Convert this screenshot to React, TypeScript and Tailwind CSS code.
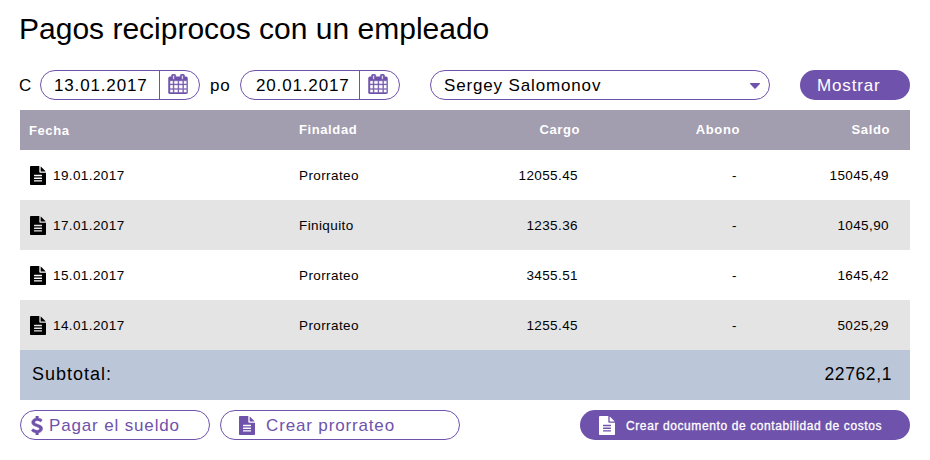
import React from "react";

const CALENDAR =
  "M128 1664h288v-288h-288v288zM480 1664h352v-288h-352v288zM128 1312h288v-352h-288v352zM480 1312h352v-352h-352v352zM128 896h288v-288h-288v288zM896 1664h352v-288h-352v288zM480 896h352v-288h-352v288zM1312 1664h288v-288h-288v288zM896 1312h352v-352h-352v352zM512 448v-288q0-13-9.5-22.5t-22.5-9.5h-64q-13 0-22.5 9.5t-9.5 22.5v288q0 13 9.5 22.5t22.5 9.5h64q13 0 22.5-9.5t9.5-22.5zM1312 1312h288v-352h-288v352zM896 896h352v-288h-352v288zM1312 896h288v-288h-288v288zM1280 448v-288q0-13-9.5-22.5t-22.5-9.5h-64q-13 0-22.5 9.5t-9.5 22.5v288q0 13 9.5 22.5t22.5 9.5h64q13 0 22.5-9.5t9.5-22.5zM1664 384v1280q0 52-38 90t-90 38h-1408q-52 0-90-38t-38-90v-1280q0-52 38-90t90-38h128v-96q0-66 47-113t113-47h64q66 0 113 47t47 113v96h384v-96q0-66 47-113t113-47h64q66 0 113 47t47 113v96h128q52 0 90 38t38 90z";

const FILE =
  "M1024 512v-472q22 14 36 28l408 408q14 14 28 36h-472zM896 544q0 40 28 68t68 28h544v1056q0 40-28 68t-68 28h-1344q-40 0-68-28t-28-68v-1600q0-40 28-68t68-28h800v544zM1152 1440v-64q0-14-9-23t-23-9h-704q-14 0-23 9t-9 23v64q0 14 9 23t23 9h704q14 0 23-9t9-23zM1152 1184v-64q0-14-9-23t-23-9h-704q-14 0-23 9t-9 23v64q0 14 9 23t23 9h704q14 0 23-9t9-23zM1152 928v-64q0-14-9-23t-23-9h-704q-14 0-23 9t-9 23v64q0 14 9 23t23 9h704q14 0 23-9t9-23z";

const DOLLAR =
  "M978 1185q0 153-99.5 263.5t-258.5 136.5v175q0 14-9 23t-23 9h-135q-13 0-22.5-9.5t-9.5-22.5v-175q-66-9-127.5-31t-101.5-44.5-74-48-46.5-37.5-17.5-18q-17-21-2-41l103-135q7-10 23-12 15-2 24 9l2 2q113 99 243 125 37 8 74 8 81 0 142.5-43t61.5-122q0-28-15-53t-33.5-42-58.5-37.5-66-32-80-32.5q-39-16-61.5-25t-61.5-26.5-62.5-31-56.5-35.5-53.5-42.5-43.5-49-35.5-58-21-66.5-8.5-78q0-138 98-242t255-134v-180q0-13 9.5-22.5t22.5-9.5h135q14 0 23 9t9 23v176q57 6 110.5 23t87 33.5 63.5 37.5 39 29 15 14q17 18 5 38l-81 146q-8 15-23 16-14 3-27-7-3-3-14.5-12t-39-26.5-58.5-32-74.5-26-85.5-11.5q-95 0-155 43t-60 111q0 26 8.5 48t29.5 41.5 39.5 33 56 31 60.5 27 70 27.5q53 20 81 31.5t76 35 75.5 42.5 62 50 53 63.5 31.5 76.5 13 94z";

function FileIcon() {
  return (
    <svg viewBox="0 0 1536 1792" className="h-[19px] w-4 shrink-0" preserveAspectRatio="none" fill="currentColor">
      <path fillRule="evenodd" d={FILE} />
    </svg>
  );
}

function DateField({ value, className }: { value: string; className: string }) {
  return (
    <div className="flex h-[30px] w-40 rounded-full border border-[#6f52ab]">
      <div className={`flex w-[119px] items-center border-r border-[#6f52ab] pt-0.5 ${className}`}>{value}</div>
      <div className="flex flex-1 items-start pt-[3px] pl-2 text-[#6f52ab]">
        <svg viewBox="-40 0 1744 1792" className="h-5 w-5" preserveAspectRatio="none" fill="currentColor" stroke="currentColor" strokeWidth="44">
          <path d={CALENDAR} />
        </svg>
      </div>
    </div>
  );
}

const rows = [
  ["19.01.2017", "Prorrateo", "12055.45", "-", "15045,49"],
  ["17.01.2017", "Finiquito", "1235.36", "-", "1045,90"],
  ["15.01.2017", "Prorrateo", "3455.51", "-", "1645,42"],
  ["14.01.2017", "Prorrateo", "1255.45", "-", "5025,29"],
];

const cols = "grid grid-cols-[279px_150px_131px_160px_150px] items-center";

export default function App() {
  return (
    <main className="h-[460px] w-[930px] overflow-hidden bg-white px-5 font-['Liberation_Sans',Arial,sans-serif] text-[17px] tracking-[0.85px] text-black">
      <h1 className="-ml-px h-[70px] pt-[11px] text-[30px] leading-9 tracking-normal whitespace-nowrap">
        Pagos reciprocos con un empleado
      </h1>

      <div className="flex h-[30px] items-center">
        <span className="-ml-px w-[21px] pt-0.5">C</span>
        <DateField value="13.01.2017" className="pl-[13px]" />
        <span className="w-10 pt-0.5 pl-[10px]">po</span>
        <DateField value="20.01.2017" className="pl-[15px]" />
        <div className="ml-[30px] flex h-[30px] w-[340px] items-center justify-between rounded-full border border-[#6f52ab] pr-[9px] pl-[13px]">
          <span className="pt-0.5">Sergey Salomonov</span>
          <svg viewBox="0 0 10 6" className="mt-0.5 h-1.5 w-2.5" fill="#6f52ab">
            <path d="M.5 0h9q.8.2.3.9L5.6 5.6q-.6.5-1.2 0L.2.9Q-.3.2.5 0z" />
          </svg>
        </div>
        <button className="ml-[30px] h-[30px] w-[110px] rounded-full bg-[#6f52ab] pt-0.5 pl-[17px] text-left text-white">
          Mostrar
        </button>
      </div>

      <section className="mt-[10px] text-[13.5px] tracking-[0.4px]">
        <div className={`${cols} h-10 bg-[#a29daf] text-[13px] font-bold tracking-[0.6px] text-white`}>
          <span className="pt-px pl-[9px]">Fecha</span>
          <span>Finaldad</span>
          <span className="text-right">Cargo</span>
          <span className="text-right">Abono</span>
          <span className="text-right">Saldo</span>
        </div>
        {rows.map((r) => (
          <div key={r[0]} className={`${cols} h-[50px] even:bg-white odd:bg-[#e4e4e4]`}>
            <span className="flex items-center gap-[7px] pl-[10px]">
              <FileIcon />
              <span className="pt-0.5">{r[0]}</span>
            </span>
            <span className="pt-0.5">{r[1]}</span>
            <span className="pt-0.5 pr-0.5 text-right">{r[2]}</span>
            <span className="pt-0.5 pr-[3px] text-right">{r[3]}</span>
            <span className="pt-0.5 pr-px text-right">{r[4]}</span>
          </div>
        ))}
        <div className="flex h-[50px] items-center justify-between bg-[#bcc6d9] pr-[18px] pb-0.5 pl-3 text-lg tracking-[1px]">
          <span>Subtotal:</span>
          <span className="pt-px text-[17.5px] tracking-[0.6px]">22762,1</span>
        </div>
      </section>

      <footer className="mt-[10px] flex gap-[10px]">
        <button className="flex h-[30px] w-[190px] items-center rounded-full border border-[#6f52ab] pl-[10px] text-[#6f52ab]">
          <svg viewBox="0 0 1024 1792" className="mr-[6px] h-[19px] w-3 shrink-0" preserveAspectRatio="none" fill="currentColor" stroke="currentColor" strokeWidth="60">
            <path d={DOLLAR} />
          </svg>
          <span className="pt-0.5">Pagar el sueldo</span>
        </button>
        <button className="flex h-[30px] w-60 items-center gap-[11px] rounded-full border border-[#6f52ab] pl-[18px] text-[#6f52ab]">
          <FileIcon />
          <span className="pt-0.5">Crear prorrateo</span>
        </button>
        <button className="ml-auto flex h-[30px] w-[330px] items-center gap-[11px] rounded-full bg-[#6f52ab] pl-[19px] text-xs tracking-[0.6px] text-white [-webkit-text-stroke:0.3px_white]">
          <FileIcon />
          <span className="pt-0.5">Crear documento de contabilidad de costos</span>
        </button>
      </footer>
    </main>
  );
}
